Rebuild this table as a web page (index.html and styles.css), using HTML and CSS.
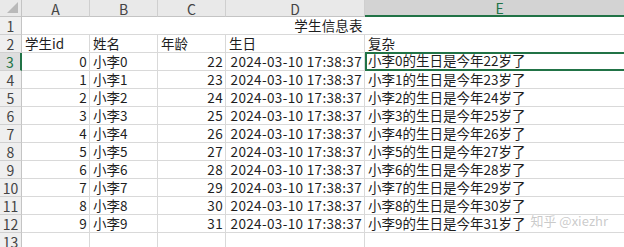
FILE: index.html
```html
<!DOCTYPE html>
<html lang="zh-CN">
<head>
<meta charset="utf-8">
<title>学生信息表</title>
<link rel="stylesheet" href="styles.css">
</head>
<body>
<div class="sheet">
  <div class="corner"><span class="tri"></span></div>
  <div class="colh">A</div>
  <div class="colh">B</div>
  <div class="colh">C</div>
  <div class="colh">D</div>
  <div class="colh sel">E</div>

  <div class="rowh">1</div>
  <div class="cell title">学生信息表</div>

  <div class="rowh">2</div>
  <div class="cell">学生id</div>
  <div class="cell">姓名</div>
  <div class="cell">年龄</div>
  <div class="cell">生日</div>
  <div class="cell">复杂</div>

  <div class="rowh selrow">3</div>
  <div class="cell num">0</div><div class="cell">小李0</div><div class="cell num">22</div><div class="cell num">2024-03-10 17:38:37</div><div class="cell active">小李0的生日是今年22岁了</div>

  <div class="rowh">4</div>
  <div class="cell num">1</div><div class="cell">小李1</div><div class="cell num">23</div><div class="cell num">2024-03-10 17:38:37</div><div class="cell">小李1的生日是今年23岁了</div>

  <div class="rowh">5</div>
  <div class="cell num">2</div><div class="cell">小李2</div><div class="cell num">24</div><div class="cell num">2024-03-10 17:38:37</div><div class="cell">小李2的生日是今年24岁了</div>

  <div class="rowh">6</div>
  <div class="cell num">3</div><div class="cell">小李3</div><div class="cell num">25</div><div class="cell num">2024-03-10 17:38:37</div><div class="cell">小李3的生日是今年25岁了</div>

  <div class="rowh">7</div>
  <div class="cell num">4</div><div class="cell">小李4</div><div class="cell num">26</div><div class="cell num">2024-03-10 17:38:37</div><div class="cell">小李4的生日是今年26岁了</div>

  <div class="rowh">8</div>
  <div class="cell num">5</div><div class="cell">小李5</div><div class="cell num">27</div><div class="cell num">2024-03-10 17:38:37</div><div class="cell">小李5的生日是今年27岁了</div>

  <div class="rowh">9</div>
  <div class="cell num">6</div><div class="cell">小李6</div><div class="cell num">28</div><div class="cell num">2024-03-10 17:38:37</div><div class="cell">小李6的生日是今年28岁了</div>

  <div class="rowh">10</div>
  <div class="cell num">7</div><div class="cell">小李7</div><div class="cell num">29</div><div class="cell num">2024-03-10 17:38:37</div><div class="cell">小李7的生日是今年29岁了</div>

  <div class="rowh">11</div>
  <div class="cell num">8</div><div class="cell">小李8</div><div class="cell num">30</div><div class="cell num">2024-03-10 17:38:37</div><div class="cell">小李8的生日是今年30岁了</div>

  <div class="rowh">12</div>
  <div class="cell num">9</div><div class="cell">小李9</div><div class="cell num">31</div><div class="cell num">2024-03-10 17:38:37</div><div class="cell">小李9的生日是今年31岁了</div>

  <div class="rowh">13</div>
  <div class="cell"></div><div class="cell"></div><div class="cell"></div><div class="cell"></div><div class="cell"></div>
</div>
<div class="watermark">知乎 @xiezhr</div>
</body>
</html>
```

FILE: styles.css
```css
html, body {
  margin: 0;
  padding: 0;
  background: #ffffff;
  overflow: hidden;
  width: 624px;
  height: 247px;
}

body {
  position: relative;
}

.sheet {
  display: grid;
  grid-template-columns: 22px 68px 68px 68px 139px 270px;
  grid-template-rows: 17px repeat(12, 18px) 18px;
  width: 635px;
  font-family: "Noto Sans CJK SC", "Noto Sans", sans-serif;
  font-size: 13.5px;
  color: #1e1e1e;
}

.corner {
  background: #e9e9e9;
  border-right: 1px solid #c4c4c4;
  border-bottom: 1px solid #c4c4c4;
  box-sizing: border-box;
  position: relative;
}

.tri {
  position: absolute;
  right: 3px;
  bottom: 3px;
  width: 0;
  height: 0;
  border-left: 11px solid transparent;
  border-bottom: 11px solid #b9b9b9;
}

.colh {
  background: #e9e9e9;
  border-right: 1px solid #cfcfcf;
  border-bottom: 1px solid #c4c4c4;
  box-sizing: border-box;
  display: flex;
  align-items: center;
  justify-content: center;
  color: #444;
  font-size: 14px;
  line-height: 14px;
  padding-top: 1px;
  overflow: hidden;
}

.colh.sel {
  background: #d3d3d3;
  border-bottom: 2px solid #217346;
  color: #217346;
}

.rowh {
  background: #efefef;
  border-right: 1px solid #c4c4c4;
  border-bottom: 1px solid #d0d0d0;
  box-sizing: border-box;
  display: flex;
  align-items: flex-end;
  justify-content: center;
  color: #444;
  font-size: 14px;
  line-height: 16px;
  overflow: hidden;
}

.rowh.selrow {
  background: #dedede;
  border-right: 2px solid #217346;
  color: #217346;
}

.cell {
  border-right: 1px solid #d9d9d9;
  border-bottom: 1px solid #d9d9d9;
  box-sizing: border-box;
  display: flex;
  align-items: flex-end;
  padding: 0 2px 0 3px;
  line-height: 17px;
  white-space: nowrap;
  overflow: visible;
}

.cell.num {
  justify-content: flex-end;
  letter-spacing: 0.35px;
}

.cell.title {
  grid-column: 2 / 7;
  justify-content: center;
  letter-spacing: 0.2px;
}

.cell.active {
  border: 2px solid #217346;
  margin-top: -1px;
  padding-left: 1px;
}

.watermark {
  position: absolute;
  right: 16px;
  top: 213px;
  white-space: nowrap;
  font-family: "Noto Sans CJK SC", "Noto Sans", sans-serif;
  font-size: 13px;
  line-height: 16px;
  color: rgba(185, 185, 185, 0.75);
  text-shadow: 0 0 1px rgba(255, 255, 255, 0.9);
}
```
